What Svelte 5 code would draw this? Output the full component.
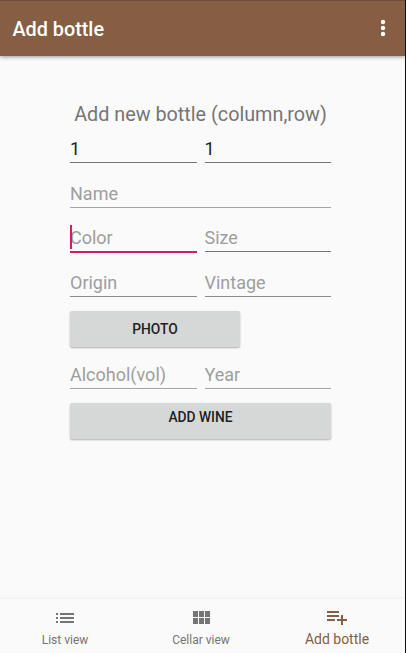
<script>
	let title = 'Add bottle';
	let activeTab = 'add';
	let column = '1';
	let row = '1';

	const tabs = [
		{
			id: 'list',
			label: 'List view',
			path: 'M3 13h2v-2H3v2zm0 4h2v-2H3v2zm0-8h2V7H3v2zm4 4h14v-2H7v2zm0 4h14v-2H7v2zM7 7v2h14V7H7z'
		},
		{
			id: 'cellar',
			label: 'Cellar view',
			path: 'M4 11h5V5H4v6zm0 7h5v-6H4v6zm6 0h5v-6h-5v6zm6 0h5v-6h-5v6zm-6-7h5V5h-5v6zm6-6v6h5V5h-5z'
		},
		{
			id: 'add',
			label: 'Add bottle',
			path: 'M14 10H2v2h12v-2zm0-4H2v2h12V6zm4 8v-4h-2v4h-4v2h4v4h2v-4h4v-2h-4zM2 16h8v-2H2v2z'
		}
	];
</script>

<div class="screen">
	<header class="app-bar">
		<h1>{title}</h1>
		<button class="menu" aria-label="More options">
			<svg width="24" height="24" viewBox="0 0 24 24">
				<circle cx="12" cy="5" r="2.2" />
				<circle cx="12" cy="11" r="2.2" />
				<circle cx="12" cy="17" r="2.2" />
			</svg>
		</button>
	</header>

	<main>
		<form on:submit|preventDefault>
			<h2>Add new bottle (column,row)</h2>
			<div class="row">
				<input class="filled" aria-label="Column" bind:value={column} />
				<input class="filled" aria-label="Row" bind:value={row} />
			</div>
			<div class="row">
				<input class="light" placeholder="Name" />
			</div>
			<div class="row">
				<div class="focused">
					<span class="caret"></span>
					<input placeholder="Color" />
				</div>
				<input class="dark" placeholder="Size" />
			</div>
			<div class="row">
				<input placeholder="Origin" />
				<input placeholder="Vintage" />
			</div>
			<button type="button" class="btn photo">PHOTO</button>
			<div class="row last">
				<input class="light" placeholder="Alcohol(vol)" />
				<input class="light" placeholder="Year" />
			</div>
			<button type="submit" class="btn submit">ADD WINE</button>
		</form>
	</main>

	<nav>
		{#each tabs as tab}
			<button class="tab {tab.id}" class:active={activeTab === tab.id} on:click={() => (activeTab = tab.id)}>
				<svg width="24" height="24" viewBox="0 0 24 24"><path d={tab.path} /></svg>
				<span>{tab.label}</span>
			</button>
		{/each}
	</nav>
</div>

<style>
	:global(body) {
		background: #fafafa;
	}

	.screen {
		box-sizing: border-box;
		display: flex;
		flex-direction: column;
		height: 653px;
		border-right: 1px solid #111;
		overflow: hidden;
		font-family: Roboto, sans-serif;
		background: #fafafa;
	}

	button {
		border: none;
		padding: 0;
		font-family: inherit;
	}

	.app-bar {
		box-sizing: border-box;
		display: flex;
		align-items: center;
		justify-content: space-between;
		height: 56px;
		padding: 1px 10px 0 12.5px;
		border-top: 1px solid #704b37;
		background: #865e43;
		box-shadow: 0 1px 4px rgba(0, 0, 0, 0.4);
	}

	h1 {
		margin: 0;
		font-size: 19.8px;
		font-weight: 500;
		color: #fff;
	}

	.menu {
		display: flex;
		background: none;
		fill: #fff;
	}

	main {
		flex: 1;
		padding: 45px 74px 0 70px;
	}

	form {
		display: flex;
		flex-direction: column;
	}

	h2 {
		margin: 0;
		height: 26px;
		line-height: 28px;
		text-align: center;
		white-space: nowrap;
		font-size: 19.8px;
		font-weight: 400;
		color: #757575;
	}

	.row {
		display: flex;
		gap: 8px;
		height: 36px;
		margin-bottom: 8.7px;
	}

	input {
		box-sizing: border-box;
		flex: 1;
		width: 100%;
		min-width: 0;
		height: 36px;
		padding: 7px 0 0;
		border: none;
		border-bottom: 1px solid #8a8a8a;
		border-radius: 0;
		outline: none;
		background: none;
		font-family: inherit;
		font-size: 18px;
		color: #212121;
	}

	input::placeholder {
		color: #9e9e9e;
		opacity: 1;
	}

	input.filled,
	input.dark {
		border-bottom-color: #757575;
	}

	input.light {
		border-bottom-color: #a5a5a5;
		padding-top: 8px;
	}

	.focused {
		position: relative;
		flex: 1;
		min-width: 0;
	}

	.focused input {
		border-bottom: 2px solid #d81b60;
		height: 37px;
	}

	.caret {
		position: absolute;
		left: 0;
		top: 9px;
		width: 2px;
		height: 24px;
		background: #d81b60;
	}

	.btn {
		height: 36px;
		border-radius: 2px;
		background: #d6d8d7;
		box-shadow: 0 1px 2px rgba(0, 0, 0, 0.3);
		font-size: 13.8px;
		font-weight: 500;
		color: #212121;
	}

	.photo {
		width: 170px;
		margin-top: 5px;
	}

	.last {
		margin: 6.4px 0 13.8px;
	}

	.submit {
		padding-bottom: 8px;
	}

	nav {
		box-sizing: border-box;
		display: flex;
		height: 56px;
		margin-left: -3px;
		border-top: 2px solid #f3f3f3;
	}

	.tab {
		display: flex;
		flex: 1;
		flex-direction: column;
		align-items: center;
		padding-top: 7px;
		background: none;
		font-size: 12px;
		color: #757575;
		fill: currentColor;
	}

	.tab span {
		line-height: 18px;
		margin-top: 1px;
		white-space: nowrap;
	}

	.tab.active {
		padding-top: 6px;
		font-size: 14px;
		color: #865e43;
	}
</style>
